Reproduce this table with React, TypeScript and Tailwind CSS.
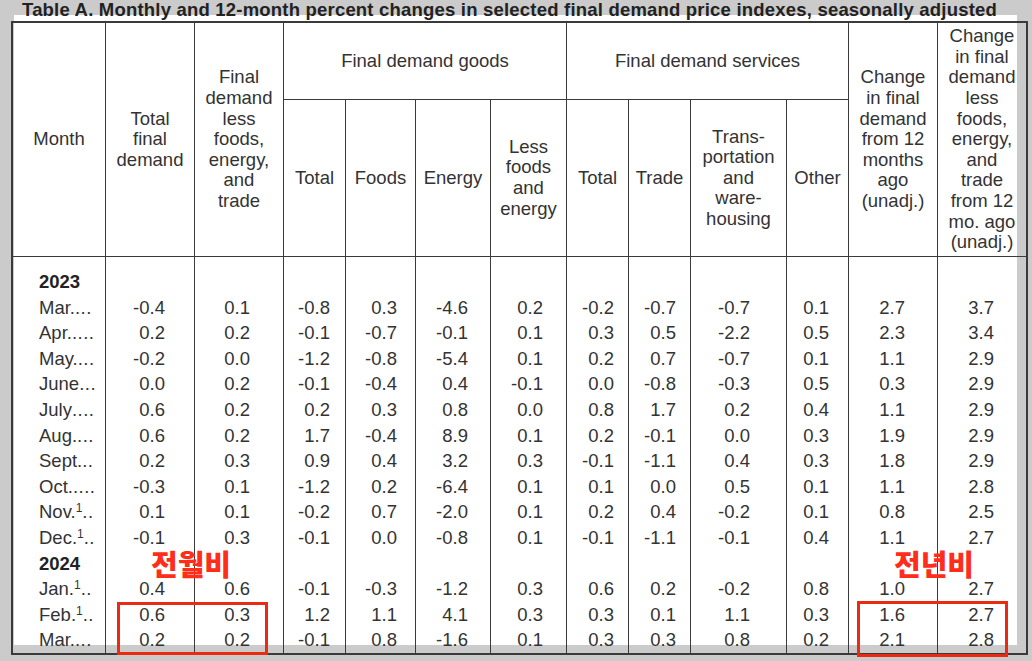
import React from "react";

const cols = "grid-cols-[93px_89px_89px_62px_70px_75px_76px_62px_62px_96px_62px_89px_88px]";

// right padding of each numeric column, so the figures line up like the PDF
const padRight = [
  "pr-[29px]",
  "pr-[33px]",
  "pr-[15px]",
  "pr-[18px]",
  "pr-[22px]",
  "pr-[23px]",
  "pr-[14px]",
  "pr-[14px]",
  "pr-[36px]",
  "pr-[19px]",
  "pr-[32px]",
  "pr-[32px]",
];

type Row = { year?: string; month?: string; sup?: boolean; dots?: string; values?: string[] };

const rows: Row[] = [
  { year: "2023" },
  { month: "Mar.", dots: "...", values: ["-0.4", "0.1", "-0.8", "0.3", "-4.6", "0.2", "-0.2", "-0.7", "-0.7", "0.1", "2.7", "3.7"] },
  { month: "Apr.", dots: "....", values: ["0.2", "0.2", "-0.1", "-0.7", "-0.1", "0.1", "0.3", "0.5", "-2.2", "0.5", "2.3", "3.4"] },
  { month: "May.", dots: "...", values: ["-0.2", "0.0", "-1.2", "-0.8", "-5.4", "0.1", "0.2", "0.7", "-0.7", "0.1", "1.1", "2.9"] },
  { month: "June", dots: "...", values: ["0.0", "0.2", "-0.1", "-0.4", "0.4", "-0.1", "0.0", "-0.8", "-0.3", "0.5", "0.3", "2.9"] },
  { month: "July", dots: "....", values: ["0.6", "0.2", "0.2", "0.3", "0.8", "0.0", "0.8", "1.7", "0.2", "0.4", "1.1", "2.9"] },
  { month: "Aug.", dots: "...", values: ["0.6", "0.2", "1.7", "-0.4", "8.9", "0.1", "0.2", "-0.1", "0.0", "0.3", "1.9", "2.9"] },
  { month: "Sept.", dots: "..", values: ["0.2", "0.3", "0.9", "0.4", "3.2", "0.3", "-0.1", "-1.1", "0.4", "0.3", "1.8", "2.9"] },
  { month: "Oct.", dots: "....", values: ["-0.3", "0.1", "-1.2", "0.2", "-6.4", "0.1", "0.1", "0.0", "0.5", "0.1", "1.1", "2.8"] },
  { month: "Nov.", sup: true, dots: "..", values: ["0.1", "0.1", "-0.2", "0.7", "-2.0", "0.1", "0.2", "0.4", "-0.2", "0.1", "0.8", "2.5"] },
  { month: "Dec.", sup: true, dots: "..", values: ["-0.1", "0.3", "-0.1", "0.0", "-0.8", "0.1", "-0.1", "-1.1", "-0.1", "0.4", "1.1", "2.7"] },
  { year: "2024" },
  { month: "Jan.", sup: true, dots: "..", values: ["0.4", "0.6", "-0.1", "-0.3", "-1.2", "0.3", "0.6", "0.2", "-0.2", "0.8", "1.0", "2.7"] },
  { month: "Feb.", sup: true, dots: "..", values: ["0.6", "0.3", "1.2", "1.1", "4.1", "0.3", "0.3", "0.1", "1.1", "0.3", "1.6", "2.7"] },
  { month: "Mar.", dots: "...", values: ["0.2", "0.2", "-0.1", "0.8", "-1.6", "0.1", "0.3", "0.3", "0.8", "0.2", "2.1", "2.8"] },
];

function Head({ lines, className = "" }: { lines: string[]; className?: string }) {
  return (
    <div className={`flex items-center justify-center text-center leading-[20.6px] border-[#3a3a3a] ${className}`}>
      <span>
        {lines.map((l, i) => (
          <React.Fragment key={i}>
            {l}
            {i < lines.length - 1 && <br />}
          </React.Fragment>
        ))}
      </span>
    </div>
  );
}

export default function App() {
  return (
    <div
      className="relative w-[1032px] h-[661px] overflow-hidden bg-[#cbcbcb] bg-[linear-gradient(#ffffff,#ffffff)] bg-no-repeat bg-[length:1003px_630px] bg-[position:14px_15px] text-[#333333]"
      style={{ fontFamily: '"Liberation Sans", Arial, sans-serif' }}
    >
      <h1 className="h-[21px] pl-[22px] text-[18.5px] leading-[20px] tracking-[0.2px] font-bold text-[#222222] whitespace-nowrap">
        Table A. Monthly and 12-month percent changes in selected final demand price indexes, seasonally adjusted
      </h1>

      <div className="ml-[11px] w-[1017px] h-[634px] border-2 border-[#3a3a3a] text-[18.5px]">
        {/* header */}
        <div className={`grid ${cols} grid-rows-[77px_157px]`}>
          <Head lines={["Month"]} className="row-span-2 border-r border-b" />
          <Head lines={["Total", "final", "demand"]} className="row-span-2 border-r border-b" />
          <Head lines={["Final", "demand", "less", "foods,", "energy,", "and", "trade"]} className="row-span-2 border-r border-b" />
          <Head lines={["Final demand goods"]} className="col-span-4 border-r border-b" />
          <Head lines={["Final demand services"]} className="col-span-4 border-r border-b" />
          <Head lines={["Change", "in final", "demand", "from 12", "months", "ago", "(unadj.)"]} className="row-span-2 border-r border-b" />
          <Head lines={["Change", "in final", "demand", "less", "foods,", "energy,", "and", "trade", "from 12", "mo. ago", "(unadj.)"]} className="row-span-2 border-b" />
          <Head lines={["Total"]} className="border-r border-b" />
          <Head lines={["Foods"]} className="border-r border-b" />
          <Head lines={["Energy"]} className="border-r border-b" />
          <Head lines={["Less", "foods", "and", "energy"]} className="border-r border-b" />
          <Head lines={["Total"]} className="border-r border-b" />
          <Head lines={["Trade"]} className="border-r border-b" />
          <Head lines={["Trans-", "portation", "and", "ware-", "housing"]} className="border-r border-b" />
          <Head lines={["Other"]} className="border-r border-b" />
        </div>

        {/* body: one column per grid track so the rules run unbroken */}
        <div className={`grid ${cols} h-[396px]`}>
          <div className="border-r border-[#3a3a3a] pt-[12px] pl-[26px]">
            {rows.map((r, i) => (
              <div key={i} className="flex h-[25.6px] leading-[25.6px] whitespace-nowrap">
                {r.year ? (
                  <span className="font-bold text-[#222222]">{r.year}</span>
                ) : (
                  <>
                    <span>{r.month}</span>
                    {r.sup && <span className="text-[12px] leading-[12px] self-start mt-[3px]">1</span>}
                    <span className="tracking-[0.5px]">{r.dots}</span>
                  </>
                )}
              </div>
            ))}
          </div>
          {padRight.map((pr, c) => (
            <div key={c} className={`pt-[12px] text-right ${pr} ${c < 11 ? "border-r border-[#3a3a3a]" : ""}`}>
              {rows.map((r, i) => (
                <div key={i} className="h-[25.6px] leading-[25.6px]">
                  {r.values ? r.values[c] : "\u00a0"}
                </div>
              ))}
            </div>
          ))}
        </div>
      </div>

      {/* red annotations drawn over the table */}
      <span
        className="absolute left-[151px] top-[547px] text-[29px] leading-[32px] font-black text-[#ff2d1a]"
        style={{ fontFamily: '"Noto Sans CJK KR", sans-serif' }}
      >
        전월비
      </span>
      <span
        className="absolute left-[894px] top-[547px] text-[29px] leading-[32px] font-black text-[#ff2d1a]"
        style={{ fontFamily: '"Noto Sans CJK KR", sans-serif' }}
      >
        전년비
      </span>
      <div className="absolute left-[117px] top-[602px] w-[151px] h-[53px] border-[3px] border-[#ec2a12]" />
      <div className="absolute left-[857px] top-[601px] w-[151px] h-[56px] border-[3px] border-[#ec2a12]" />
    </div>
  );
}
